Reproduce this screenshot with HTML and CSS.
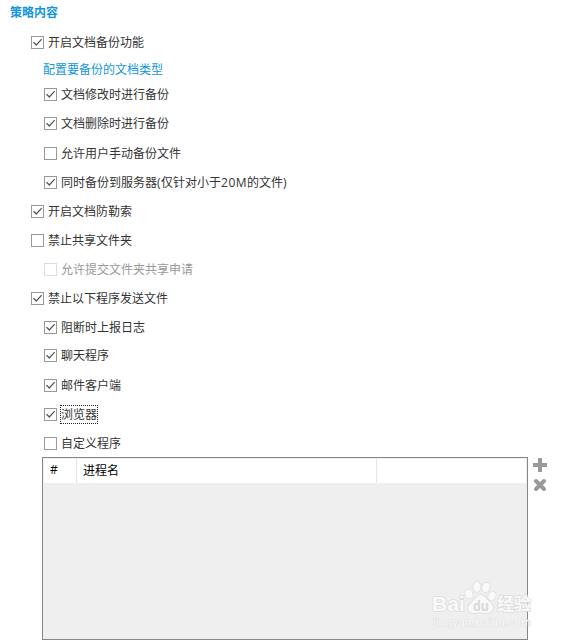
FILE: index.html
```html
<!DOCTYPE html>
<html lang="zh-CN">
<head>
    <meta charset="UTF-8">
    <meta name="viewport" content="width=device-width, initial-scale=1.0">
    <title>策略内容</title>
    <link rel="stylesheet" href="styles.css">
</head>
<body>
    <div class="container">
        <h1>策略内容</h1>
        <form id="policyForm">
            <label class="option"><input type="checkbox" checked><span>开启文档备份功能</span></label>
            <a class="config-link">配置要备份的文档类型</a>
            <label class="option sub"><input type="checkbox" checked><span>文档修改时进行备份</span></label>
            <label class="option sub tall"><input type="checkbox" checked><span>文档删除时进行备份</span></label>
            <label class="option sub"><input type="checkbox"><span>允许用户手动备份文件</span></label>
            <label class="option sub"><input type="checkbox" checked><span>同时备份到服务器<span class="latin">(</span>仅针对小于<span class="latin">20M</span>的文件<span class="latin">)</span></span></label>

            <label class="option"><input type="checkbox" checked><span>开启文档防勒索</span></label>

            <label class="option"><input type="checkbox"><span>禁止共享文件夹</span></label>
            <label class="option sub disabled"><input type="checkbox" disabled><span>允许提交文件夹共享申请</span></label>

            <label class="option"><input type="checkbox" checked><span>禁止以下程序发送文件</span></label>
            <label class="option sub short"><input type="checkbox" checked><span>阻断时上报日志</span></label>
            <label class="option sub tall"><input type="checkbox" checked><span>聊天程序</span></label>
            <label class="option sub"><input type="checkbox" checked><span>邮件客户端</span></label>
            <label class="option sub"><input type="checkbox" checked><span class="focused">浏览器</span></label>
            <label class="option sub"><input type="checkbox"><span>自定义程序</span></label>

            <div class="process-area">
                <div class="process-list">
                    <div class="list-header">
                        <span class="latin">#</span>
                        <span>进程名</span>
                        <span></span>
                    </div>
                    <svg class="watermark" width="106" height="56" viewBox="0 0 106 56">
                        <text class="brand" x="3" y="33" textLength="33" lengthAdjust="spacingAndGlyphs">Bai</text>
                        <g class="paw">
                            <ellipse cx="40" cy="16" rx="3.5" ry="4.5" transform="rotate(-20 40 16)"/>
                            <ellipse cx="48" cy="9" rx="3.6" ry="5"/>
                            <ellipse cx="57" cy="9.5" rx="3.6" ry="5" transform="rotate(12 57 9.5)"/>
                            <ellipse cx="63" cy="18" rx="3.5" ry="4.5" transform="rotate(25 63 18)"/>
                            <path d="M52 17C56 17 57 21 61 24C66 28 65 35 58 35C54 35 51 34 47 35C39 36 36 30 42 25C46 22 47 17 52 17Z"/>
                        </g>
                        <text class="du" x="44" y="32.5" textLength="16" lengthAdjust="spacingAndGlyphs">du</text>
                        <text class="brand-cn" x="68" y="32">经验</text>
                        <text class="site" x="4" y="48" textLength="98" lengthAdjust="spacingAndGlyphs">jingyan.baidu.com</text>
                    </svg>
                </div>
                <div class="list-tools">
                    <svg width="14" height="14" viewBox="0 0 14 14"><path d="M5 0h4v5h5v4H9v5H5V9H0V5h5z"/></svg>
                    <svg class="remove" width="14" height="14" viewBox="0 0 14 14"><path d="M3 3l8 8M11 3l-8 8"/></svg>
                </div>
            </div>
        </form>
    </div>
</body>
</html>
```

FILE: styles.css
```css
body {
    margin: 0;
    background-color: #fff;
    color: #333;
    font-family: 'Noto Sans CJK SC', sans-serif;
    font-size: 12px;
}

.container {
    padding-left: 10px;
}

h1 {
    height: 28px;
    margin: 0;
    color: #1296db;
    font-size: 12px;
    font-weight: bold;
    line-height: 24px;
}

.option {
    display: flex;
    align-items: flex-start;
    height: 29px;
    margin-left: 21px;
    line-height: 27px;
    white-space: nowrap;
}

.option.sub {
    margin-left: 34px;
}

.option.tall {
    height: 30px;
}

.option.short {
    height: 28px;
}

.option input {
    appearance: none;
    flex: none;
    box-sizing: border-box;
    width: 13px;
    height: 13px;
    margin: 8px 4px 0 0;
    border: 1px solid #999;
    background-color: #fff;
}

/* check mark */
.option input:checked::after {
    content: '';
    display: block;
    width: 11px;
    height: 11px;
    background-color: #555;
    clip-path: polygon(1px 5.6px, 2px 4.7px, 4.3px 7.1px, 9.2px 1.7px, 10.1px 2.6px, 4.3px 9px);
}

.option.disabled {
    color: #999;
}

.option.disabled input {
    border-color: #ddd;
}

.latin {
    font-family: 'Open Sans', 'Noto Sans', sans-serif;
    letter-spacing: 0.5px;
}

.focused {
    height: 17px;
    margin-top: 6px;
    outline: 1px dotted #222;
    line-height: 15px;
}

.config-link {
    display: block;
    height: 23px;
    margin-left: 33px;
    color: #1296db;
    line-height: 24px;
}

.process-area {
    display: flex;
    margin: -1px 0 0 32px;
}

.process-list {
    position: relative;
    box-sizing: border-box;
    width: 486px;
    height: 183px;
    padding: 1px;
    border: 1px solid #828790;
    background-color: #efefef;
}

.list-header {
    display: grid;
    grid-template-columns: 33px 300px 1fr;
    height: 24px;
    background-color: #fff;
    color: #000;
    line-height: 22px;
}

.list-header span {
    padding-left: 6px;
    border-right: 1px solid #e5e5e5;
}

.list-header span:last-child {
    border-right: 0;
}

.list-tools {
    display: flex;
    flex-direction: column;
    gap: 6px;
    padding: 1px 0 0 5px;
}

.list-tools svg {
    fill: #999;
}

.list-tools .remove {
    fill: none;
    stroke: #999;
    stroke-width: 4;
    stroke-linecap: round;
}

/* logo over the lower right corner of the list */
.watermark {
    position: absolute;
    top: 120px;
    left: 386px;
    fill: #f9f9f9;
    stroke: #dcdcdc;
    stroke-width: 1.5px;
    stroke-linejoin: round;
    paint-order: stroke;
}

.brand {
    font: bold 21px 'Liberation Sans', sans-serif;
}

.du {
    font: bold 14px 'Open Sans', sans-serif;
    fill: #d8d8d8;
    stroke: none;
}

.brand-cn {
    font: bold 17px 'Noto Sans CJK SC', sans-serif;
}

.site {
    font: 11px 'Liberation Sans', sans-serif;
    fill: #fafafa;
    stroke: #dfdfdf;
    stroke-width: 1px;
}
```
